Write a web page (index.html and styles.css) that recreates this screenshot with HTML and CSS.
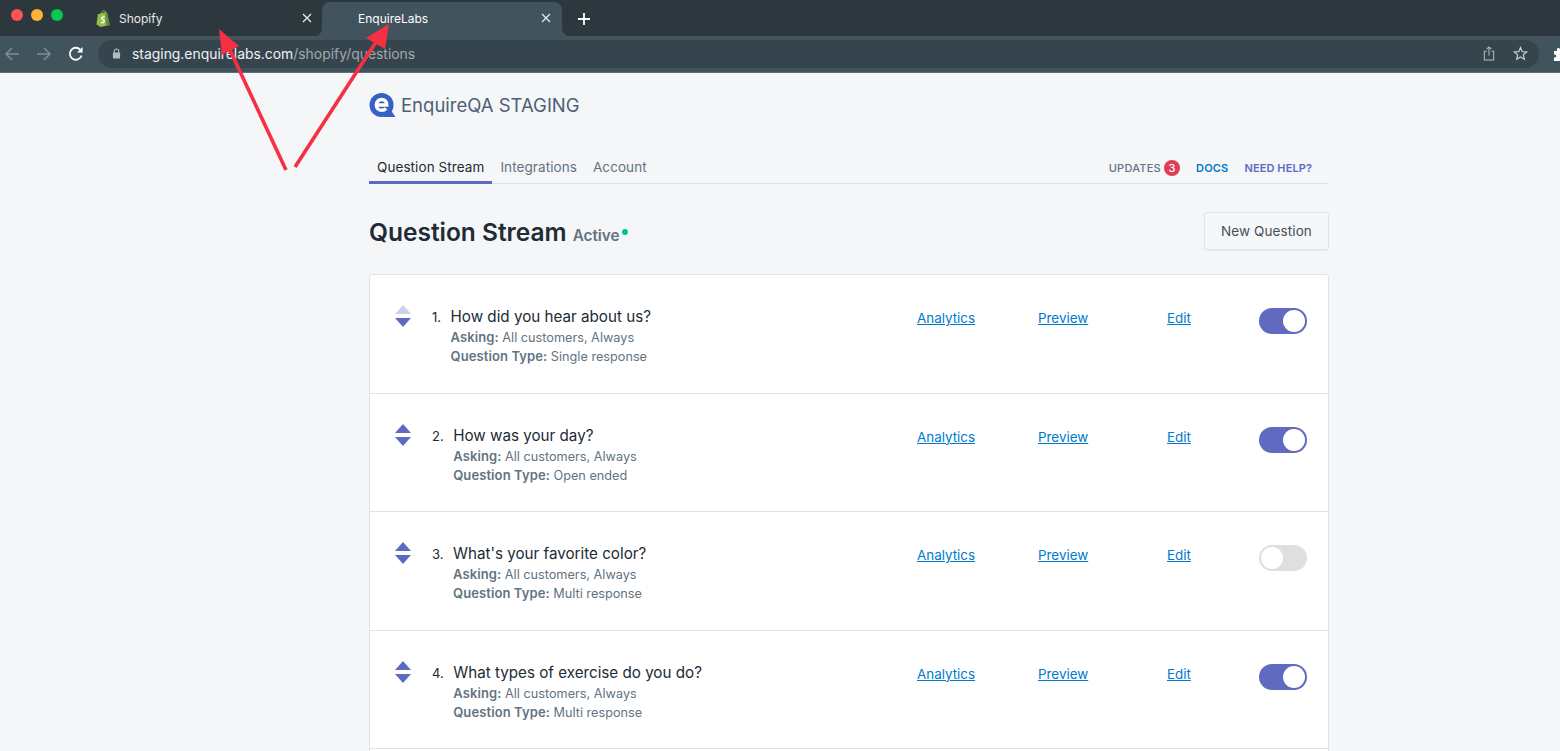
FILE: index.html
```html
<!DOCTYPE html>
<html lang="en">
<head>
    <meta charset="UTF-8">
    <meta name="viewport" content="width=device-width, initial-scale=1.0">
    <title>EnquireLabs</title>
    <link rel="stylesheet" href="styles.css">
</head>
<body>

    <!-- Browser chrome -->
    <div class="tabstrip">
        <div class="lights">
            <span class="light red"></span>
            <span class="light yellow"></span>
            <span class="light green"></span>
        </div>
        <div class="tab">
            <svg class="favicon" viewBox="0 0 16 18" width="15" height="17">
                <path d="M5.5 4 C6 1.5 7.5 0.5 9 0.8 C10.5 1 10.8 2.5 10.8 4" fill="none" stroke="#95bf47" stroke-width="1"/>
                <path d="M2 4.5 L9.5 2.4 L12 3 L14.5 16 L5 18 L0.5 15.5 Z" fill="#95bf47"/>
                <path d="M12 3 L14.5 16 L10.5 17 L10 2.6 Z" fill="#5e8e3e"/>
                <path d="M9.3 7.6 C7.6 6.9 6 7.6 6.2 8.9 C6.4 10.2 8.6 10.2 8.8 11.8 C9 13.2 7.2 13.9 5.4 13" fill="none" stroke="#fff" stroke-width="1.5"/>
            </svg>
            <span class="tab-title">Shopify</span>
            <svg class="tab-close" viewBox="0 0 10 10" width="10" height="10">
                <path d="M1 1 L9 9 M9 1 L1 9" stroke="#e8eaed" stroke-width="1.3"/>
            </svg>
        </div>
        <div class="tab active">
            <span class="tab-title">EnquireLabs</span>
            <svg class="tab-close" viewBox="0 0 10 10" width="10" height="10">
                <path d="M1 1 L9 9 M9 1 L1 9" stroke="#e8eaed" stroke-width="1.3"/>
            </svg>
        </div>
        <svg class="new-tab" viewBox="0 0 12 12" width="12" height="12">
            <path d="M6 0 V12 M0 6 H12" stroke="#fff" stroke-width="1.8"/>
        </svg>
    </div>

    <div class="toolbar">
        <svg class="tool-icon" viewBox="0 0 16 16" width="16" height="16">
            <path d="M15 8 H2 M8 2 L2 8 L8 14" fill="none" stroke="#7f8e96" stroke-width="1.6"/>
        </svg>
        <svg class="tool-icon" viewBox="0 0 16 16" width="16" height="16">
            <path d="M1 8 H14 M8 2 L14 8 L8 14" fill="none" stroke="#7f8e96" stroke-width="1.6"/>
        </svg>
        <svg class="tool-icon" viewBox="0 0 16 16" width="16" height="16">
            <path d="M13.6 9.5 A6 6 0 1 1 12.2 3.6" fill="none" stroke="#fff" stroke-width="1.8"/>
            <path d="M14.6 1 V6.6 H9 Z" fill="#fff"/>
        </svg>
        <div class="omnibox">
            <svg class="lock" viewBox="0 0 10 12" width="9" height="11">
                <path d="M2.5 5.5 V3.5 A2.5 2.5 0 0 1 7.5 3.5 V5.5" fill="none" stroke="#b4bcc0" stroke-width="1.2"/>
                <rect x="1" y="5" width="8" height="6.5" rx="1" fill="#b4bcc0"/>
            </svg>
            <span class="url">staging.enquirelabs.com<span class="url-path">/shopify/questions</span></span>
            <svg class="share" viewBox="0 0 12 16" width="12" height="15">
                <path d="M3.5 5.5 H1 V15 H11 V5.5 H8.5 M6 10 V1 M3.5 3.3 L6 1 L8.5 3.3" fill="none" stroke="#b4bcc0" stroke-width="1.1"/>
            </svg>
            <svg class="star" viewBox="0 0 16 16" width="15" height="15">
                <path d="M8 1.5 L9.9 6 L14.6 6.4 L11 9.5 L12.1 14.2 L8 11.7 L3.9 14.2 L5 9.5 L1.4 6.4 L6.1 6 Z" fill="none" stroke="#c6ccd0" stroke-width="1.3"/>
            </svg>
        </div>
        <svg class="puzzle" viewBox="0 0 16 16" width="16" height="16">
            <path d="M1 5 H4 C3 1 8 1 7 5 H11 V8 C14 7 14 12 11 11 V15 H1 V11.5 C4 12 4 8 1 8.5 Z" fill="#fff"/>
        </svg>
    </div>

    <!-- Page -->
    <main class="page">
        <div class="brand">
            <svg class="logo" viewBox="0 0 28 26" width="27" height="25">
                <circle cx="13" cy="12.5" r="12.5" fill="#3560c5"/>
                <path d="M15 25 H27.5 L22 17 Z" fill="#3560c5"/>
                <path d="M7.6 12.4 H18.4 C18.4 8.4 16 6.8 13.2 6.8 C10 6.8 7.6 9 7.6 12.4 C7.6 15.8 10 18 13.2 18 C15 18 16.6 17.4 17.8 16.2" fill="none" stroke="#fff" stroke-width="3.6"/>
            </svg>
            <span class="brand-name">EnquireQA STAGING</span>
        </div>

        <nav class="nav">
            <a class="nav-item selected">Question Stream</a>
            <a class="nav-item">Integrations</a>
            <a class="nav-item">Account</a>
            <div class="nav-right">
                <span class="updates">UPDATES <span class="badge">3</span></span>
                <a class="docs">DOCS</a>
                <a class="help">NEED HELP?</a>
            </div>
        </nav>

        <div class="page-head">
            <h1>Question Stream</h1>
            <span class="status">Active</span>
            <span class="status-dot"></span>
            <button class="button">New Question</button>
        </div>

        <div class="card">
            <div class="row">
                <div class="sort">
                    <span class="arrow up faded"></span>
                    <span class="arrow down"></span>
                </div>
                <div class="question">
                    <span class="num">1.</span>
                    <div class="question-body">
                        <div class="question-title">How did you hear about us?</div>
                        <p><b>Asking:</b> All customers, Always</p>
                        <p><b>Question Type:</b> Single response</p>
                    </div>
                </div>
                <a class="link col-analytics">Analytics</a>
                <a class="link col-preview">Preview</a>
                <a class="link col-edit">Edit</a>
                <span class="toggle on"></span>
            </div>
            <div class="row">
                <div class="sort">
                    <span class="arrow up"></span>
                    <span class="arrow down"></span>
                </div>
                <div class="question">
                    <span class="num">2.</span>
                    <div class="question-body">
                        <div class="question-title">How was your day?</div>
                        <p><b>Asking:</b> All customers, Always</p>
                        <p><b>Question Type:</b> Open ended</p>
                    </div>
                </div>
                <a class="link col-analytics">Analytics</a>
                <a class="link col-preview">Preview</a>
                <a class="link col-edit">Edit</a>
                <span class="toggle on"></span>
            </div>
            <div class="row">
                <div class="sort">
                    <span class="arrow up"></span>
                    <span class="arrow down"></span>
                </div>
                <div class="question">
                    <span class="num">3.</span>
                    <div class="question-body">
                        <div class="question-title">What's your favorite color?</div>
                        <p><b>Asking:</b> All customers, Always</p>
                        <p><b>Question Type:</b> Multi response</p>
                    </div>
                </div>
                <a class="link col-analytics">Analytics</a>
                <a class="link col-preview">Preview</a>
                <a class="link col-edit">Edit</a>
                <span class="toggle"></span>
            </div>
            <div class="row">
                <div class="sort">
                    <span class="arrow up"></span>
                    <span class="arrow down"></span>
                </div>
                <div class="question">
                    <span class="num">4.</span>
                    <div class="question-body">
                        <div class="question-title">What types of exercise do you do?</div>
                        <p><b>Asking:</b> All customers, Always</p>
                        <p><b>Question Type:</b> Multi response</p>
                    </div>
                </div>
                <a class="link col-analytics">Analytics</a>
                <a class="link col-preview">Preview</a>
                <a class="link col-edit">Edit</a>
                <span class="toggle on"></span>
            </div>
        </div>
    </main>

    <!-- Annotation arrows drawn over the screenshot -->
    <svg class="annotations" viewBox="0 0 1560 751" width="1560" height="751">
        <path d="M286 170 L229 48" stroke="#f62f42" stroke-width="3.6" fill="none"/>
        <path d="M219 29 L239 46 L222 55 Z" fill="#f62f42"/>
        <path d="M295 167 L376 42" stroke="#f62f42" stroke-width="3.6" fill="none"/>
        <path d="M389 24 L385 49 L366 38 Z" fill="#f62f42"/>
    </svg>

</body>
</html>
```

FILE: styles.css
```css
* {
    margin: 0;
    padding: 0;
    box-sizing: border-box;
}

body {
    font-family: 'Inter', 'Liberation Sans', sans-serif;
    background-color: #f4f6f8;
    color: #212b36;
    height: 100vh;
    overflow: hidden;
    position: relative;
}

/* Browser chrome */
.tabstrip {
    height: 36px;
    background-color: #2c383e;
    display: flex;
    align-items: flex-end;
    padding-left: 11px;
}

.lights {
    display: flex;
    gap: 8px;
    width: 73px;
    align-self: flex-start;
    padding-top: 9px;
}

.light {
    width: 12px;
    height: 12px;
    border-radius: 50%;
}

.red { background-color: #fb5253; }
.yellow { background-color: #fdb336; }
.green { background-color: #03c94e; }

.tab {
    width: 238px;
    height: 34px;
    display: flex;
    align-items: center;
    padding: 0 10px 2px 12px;
    color: #e8eaed;
    font-size: 12px;
}

.tab.active {
    position: relative;
    width: 240px;
    padding-left: 36px;
    padding-right: 11px;
    background-color: #41535c;
    border-radius: 8px 8px 0 0;
    color: #fff;
}

.tab.active::before,
.tab.active::after {
    content: "";
    position: absolute;
    bottom: 0;
    width: 8px;
    height: 8px;
}

.tab.active::before {
    left: -8px;
    background: radial-gradient(circle at 0 0, transparent 8px, #41535c 8.5px);
}

.tab.active::after {
    right: -8px;
    background: radial-gradient(circle at 100% 0, transparent 8px, #41535c 8.5px);
}

.favicon {
    margin-right: 8px;
}

.tab-title {
    flex: 1;
}

.new-tab {
    margin: 0 0 11px 16px;
}

.toolbar {
    height: 37px;
    background-color: #41535c;
    border-bottom: 1px solid #5d6d75;
    display: flex;
    align-items: center;
    padding: 0 0 1px 4px;
}

.tool-icon {
    margin-right: 16px;
    flex-shrink: 0;
}

.omnibox {
    width: 1441px;
    height: 28px;
    margin-left: -2px;
    background-color: #36454d;
    border-radius: 14px;
    display: flex;
    align-items: center;
    padding-left: 14px;
    flex-shrink: 0;
}

.url {
    margin-left: 11px;
    flex: 1;
    font-size: 13.9px;
    color: #f1f3f4;
}

.url-path {
    color: #a0a9ae;
}

.share {
    margin-right: 18px;
}

.star {
    margin-right: 11px;
}

.puzzle {
    margin-left: 14px;
    flex-shrink: 0;
}

/* Page */
.page {
    width: 960px;
    margin-left: 369px;
}

.brand {
    display: flex;
    align-items: center;
    gap: 5px;
    padding-top: 6px;
    height: 58px;
}

.brand-name {
    font-size: 18.5px;
    color: #4f5f76;
}

.nav {
    display: flex;
    align-items: flex-start;
    height: 53px;
    padding-top: 24px;
    border-bottom: 1px solid #dfe3e8;
}

.nav-item {
    font-size: 13.5px;
    line-height: 25px;
    height: 29px;
    padding: 0 8px;
    color: #637381;
    letter-spacing: 0.08px;
}

.nav-item.selected {
    color: #212b36;
    border-bottom: 3px solid #5c6ac4;
}

.nav-right {
    margin-left: auto;
    display: flex;
    align-items: center;
    gap: 16px;
    height: 25px;
    padding-right: 17px;
    font-size: 11px;
    font-weight: 500;
    letter-spacing: 0.25px;
}

.updates {
    display: flex;
    align-items: center;
    gap: 3px;
    color: #637381;
}

.badge {
    width: 16px;
    height: 16px;
    border-radius: 50%;
    background-color: #de3f58;
    color: #fff;
    text-align: center;
    line-height: 16px;
    letter-spacing: 0;
}

.docs {
    color: #007ace;
    font-weight: 600;
    letter-spacing: 0.2px;
}

.help {
    color: #5c6ac4;
    font-weight: 600;
    letter-spacing: 0.1px;
}

.page-head {
    display: flex;
    align-items: center;
    height: 90.35px;
    padding-top: 4px;
}

h1 {
    font-size: 24.5px;
    font-weight: 600;
    color: #212b36;
    padding-top: 1px;
}

.status {
    margin: 9px 0 0 6px;
    font-size: 15.3px;
    font-weight: 600;
    color: #637381;
}

.status-dot {
    width: 6px;
    height: 6px;
    margin: 2px 0 0 2px;
    border-radius: 50%;
    background-color: #00c58a;
}

.button {
    margin-left: auto;
    width: 125px;
    height: 38px;
    font-family: inherit;
    font-size: 13.5px;
    letter-spacing: 0.1px;
    color: #454f5b;
    background-color: #f6f7f9;
    border: 1px solid #dfe3e8;
    border-radius: 3px;
    box-shadow: 0 1px 1px rgba(0, 0, 0, 0.05);
}

.card {
    background-color: #fff;
    border: 1px solid #dfe3e8;
    border-radius: 3px;
    height: 500px;
}

.row {
    display: flex;
    align-items: flex-start;
    height: 118.4px;
    padding: 30px 21px 0 25px;
    border-bottom: 1px solid #dfe3e8;
}

.sort {
    width: 16px;
    display: flex;
    flex-direction: column;
    gap: 4px;
    margin-right: 21px;
}

.arrow {
    width: 0;
    height: 0;
    border-left: 8px solid transparent;
    border-right: 8px solid transparent;
}

.arrow.up { border-bottom: 9px solid #5c6ac4; }
.arrow.down { border-top: 9px solid #5c6ac4; }
.arrow.faded { border-bottom-color: #cdd2ec; }

.question {
    flex: 1;
    display: flex;
    font-size: 13px;
}

.num {
    margin-right: 9.5px;
    line-height: 24px;
    color: #212b36;
}

.question-title {
    font-size: 15.2px;
    line-height: 24px;
    margin-bottom: -1px;
}

.question-body p {
    font-size: 12.7px;
    line-height: 19px;
    color: #637381;
}

.question-body b {
    font-size: 13px;
    font-weight: 600;
    letter-spacing: 0.1px;
}

.link {
    margin-top: 3px;
    font-size: 13.4px;
    line-height: 20px;
    color: #007ace;
    text-decoration: underline;
    flex-shrink: 0;
}

.col-analytics { width: 121px; }
.col-preview { width: 129px; }
.col-edit { width: 92px; }

.toggle {
    position: relative;
    width: 48px;
    height: 26px;
    margin-top: 3px;
    border-radius: 13px;
    background-color: #dfdfdf;
    flex-shrink: 0;
}

.toggle::after {
    content: "";
    position: absolute;
    top: 2px;
    left: 2px;
    width: 22px;
    height: 22px;
    border-radius: 50%;
    background-color: #fff;
}

.toggle.on {
    background-color: #5f6ac0;
}

.toggle.on::after {
    left: 24px;
}

.annotations {
    position: absolute;
    top: 0;
    left: 0;
    pointer-events: none;
}
```
